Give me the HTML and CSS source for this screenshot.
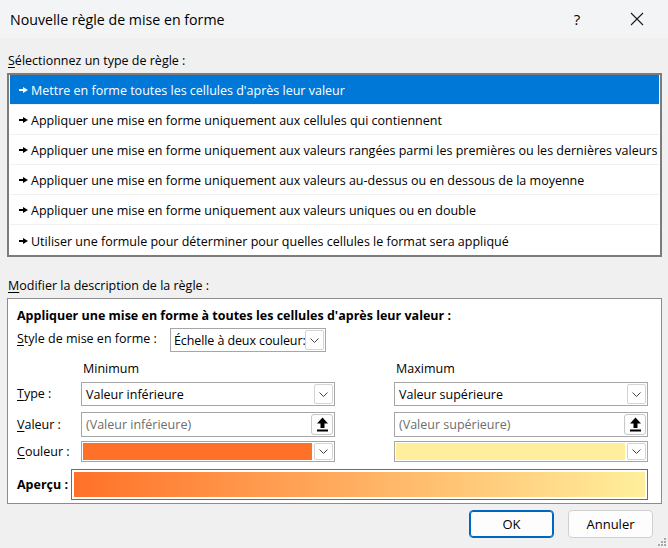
FILE: index.html
```html
<!DOCTYPE html>
<html lang="fr">
<head>
    <meta charset="UTF-8">
    <title>Nouvelle règle de mise en forme</title>
    <link rel="stylesheet" href="styles.css">
</head>
<body>
    <div class="dialog">
        <!-- Title bar -->
        <div class="titlebar">
            <span class="title">Nouvelle règle de mise en forme</span>
            <span class="help">?</span>
            <svg class="close" width="14" height="14" viewBox="0 0 14 14">
                <path d="M1 1 L13 13 M13 1 L1 13" stroke="#1a1a1a" stroke-width="1.1" fill="none"/>
            </svg>
        </div>

        <div class="section-label label-top"><u>S</u>électionnez un type de règle :</div>

        <ul class="rule-list">
            <li class="selected"><span class="pointer"></span>Mettre en forme toutes les cellules d'après leur valeur</li>
            <li><span class="pointer"></span>Appliquer une mise en forme uniquement aux cellules qui contiennent</li>
            <li><span class="pointer"></span>Appliquer une mise en forme uniquement aux valeurs rangées parmi les premières ou les dernières valeurs</li>
            <li><span class="pointer"></span>Appliquer une mise en forme uniquement aux valeurs au-dessus ou en dessous de la moyenne</li>
            <li><span class="pointer"></span>Appliquer une mise en forme uniquement aux valeurs uniques ou en double</li>
            <li><span class="pointer"></span>Utiliser une formule pour déterminer pour quelles cellules le format sera appliqué</li>
        </ul>

        <div class="section-label label-mid"><u>M</u>odifier la description de la règle :</div>

        <div class="desc">
            <div class="desc-title">Appliquer une mise en forme à toutes les cellules d'après leur valeur :</div>

            <div class="style-row">
                <span class="style-label"><u>S</u>tyle de mise en forme :</span>
                <div class="combo combo-style">
                    <span class="combo-text">Échelle à deux couleur:</span>
                    <span class="drop"><svg width="9" height="5" viewBox="0 0 9 5"><path d="M0.5 0.5 L4.5 4.5 L8.5 0.5" stroke="#444" fill="none"/></svg></span>
                </div>
            </div>

            <div class="grid">
                <span></span>
                <span class="col-head">Minimum</span>
                <span></span>
                <span class="col-head">Maximum</span>

                <span class="row-label row-type"><u>T</u>ype :</span>
                <div class="combo row-type">
                    <span class="combo-text">Valeur inférieure</span>
                    <span class="drop"><svg width="9" height="5" viewBox="0 0 9 5"><path d="M0.5 0.5 L4.5 4.5 L8.5 0.5" stroke="#444" fill="none"/></svg></span>
                </div>
                <span></span>
                <div class="combo row-type">
                    <span class="combo-text">Valeur supérieure</span>
                    <span class="drop"><svg width="9" height="5" viewBox="0 0 9 5"><path d="M0.5 0.5 L4.5 4.5 L8.5 0.5" stroke="#444" fill="none"/></svg></span>
                </div>

                <span class="row-label row-value"><u>V</u>aleur :</span>
                <div class="field row-value">
                    <span class="placeholder">(Valeur inférieure)</span>
                    <span class="ref-btn"><svg width="13" height="15" viewBox="0 0 13 15"><path d="M6.5 0.5 L12 6.5 L8.5 6.5 L8.5 11 L4.5 11 L4.5 6.5 L1 6.5 Z" fill="#000"/><rect x="1" y="12.5" width="11" height="2" fill="#000"/></svg></span>
                </div>
                <span></span>
                <div class="field row-value">
                    <span class="placeholder">(Valeur supérieure)</span>
                    <span class="ref-btn"><svg width="13" height="15" viewBox="0 0 13 15"><path d="M6.5 0.5 L12 6.5 L8.5 6.5 L8.5 11 L4.5 11 L4.5 6.5 L1 6.5 Z" fill="#000"/><rect x="1" y="12.5" width="11" height="2" fill="#000"/></svg></span>
                </div>

                <span class="row-label row-color"><u>C</u>ouleur :</span>
                <div class="combo row-color">
                    <span class="swatch swatch-min"></span>
                    <span class="drop"><svg width="9" height="5" viewBox="0 0 9 5"><path d="M0.5 0.5 L4.5 4.5 L8.5 0.5" stroke="#444" fill="none"/></svg></span>
                </div>
                <span></span>
                <div class="combo row-color">
                    <span class="swatch swatch-max"></span>
                    <span class="drop"><svg width="9" height="5" viewBox="0 0 9 5"><path d="M0.5 0.5 L4.5 4.5 L8.5 0.5" stroke="#444" fill="none"/></svg></span>
                </div>
            </div>

            <div class="preview-row">
                <span class="preview-label">Aperçu :</span>
                <div class="preview"><div class="gradient"></div></div>
            </div>
        </div>

        <div class="buttons">
            <button class="button primary">OK</button>
            <button class="button">Annuler</button>
        </div>

        <svg class="grip" width="10" height="10" viewBox="0 0 10 10">
            <rect x="7" y="1" width="2" height="2" fill="#a8a8a8"/>
            <rect x="4" y="4" width="2" height="2" fill="#a8a8a8"/>
            <rect x="7" y="4" width="2" height="2" fill="#a8a8a8"/>
            <rect x="1" y="7" width="2" height="2" fill="#a8a8a8"/>
            <rect x="4" y="7" width="2" height="2" fill="#a8a8a8"/>
            <rect x="7" y="7" width="2" height="2" fill="#a8a8a8"/>
        </svg>
    </div>
</body>
</html>
```

FILE: styles.css
```css
* {
    margin: 0;
    padding: 0;
    box-sizing: border-box;
}

body {
    width: 668px;
    height: 548px;
    overflow: hidden;
    background-color: #f0f0f0;
    font-family: 'Open Sans', 'Noto Sans', sans-serif;
    font-size: 12.5px;
    color: #000;
}

.dialog {
    position: relative;
    width: 668px;
    height: 548px;
}

u {
    text-decoration: underline;
    text-underline-offset: 2px;
}

/* Title bar */
.titlebar {
    height: 38px;
    display: flex;
    align-items: center;
    background: #f3f4f6;
    padding-left: 10px;
}

.title {
    font-size: 14.2px;
    flex: 1;
}

.help {
    font-size: 15px;
    width: 14px;
    text-align: center;
    margin-right: 46px;
}

.close {
    margin-right: 24px;
}

/* Section labels */
.section-label {
    line-height: 16px;
    padding-left: 8px;
}

.label-top {
    height: 35px;
    padding-top: 15px;
}

.label-mid {
    height: 41px;
    padding-top: 21px;
}

/* Rule type list */
.rule-list {
    list-style: none;
    margin-left: 7px;
    width: 655px;
    height: 184px;
    background: #fff;
    border: 2px solid #7c7c7c;
    padding: 0 1px;
}

.rule-list li {
    height: 30px;
    display: flex;
    align-items: center;
    padding-left: 9px;
    padding-top: 2px;
    border-bottom: 1px solid #f0f0f0;
    white-space: nowrap;
    overflow: hidden;
}

.rule-list li:last-child {
    border-bottom: none;
}

.rule-list li.selected {
    background: #0078d7;
    color: #fff;
}

.pointer {
    position: relative;
    width: 10px;
    height: 6px;
    margin-right: 2px;
    margin-top: -1px;
}

.pointer::before {
    content: '';
    position: absolute;
    left: 0;
    top: 2px;
    width: 5px;
    height: 2px;
    background: currentColor;
}

.pointer::after {
    content: '';
    position: absolute;
    left: 4px;
    top: 0;
    border-left: 5px solid currentColor;
    border-top: 3px solid transparent;
    border-bottom: 3px solid transparent;
}

/* Description panel */
.desc {
    margin-left: 7px;
    width: 655px;
    height: 206px;
    background: #fff;
    border: 1px solid #8c8c8c;
    padding-left: 9px;
}

.desc-title {
    font-weight: 700;
    line-height: 16px;
    padding-top: 9px;
    height: 28px;
}

.style-row {
    display: flex;
    align-items: center;
    height: 25px;
    padding-top: 1px;
}

.style-label {
    width: 153px;
    margin-top: -3px;
}

.grid {
    display: grid;
    grid-template-columns: 64px 254px 59px 254px;
    grid-template-rows: 28px 24px 25px 21px;
    row-gap: 4px;
    align-items: center;
}

.col-head {
    align-self: start;
    padding-top: 9px;
    padding-left: 2px;
    line-height: 16px;
}

.grid .row-type {
    margin-top: -4px;
}

.row-label {
    line-height: 16px;
}

.combo, .field {
    height: 100%;
    display: flex;
    align-items: center;
    background: #fff;
    border: 1px solid #a6a6a6;
    padding: 1px;
}

.combo-text, .placeholder {
    flex: 1;
    padding-left: 3px;
    white-space: nowrap;
    overflow: hidden;
}

.placeholder {
    color: #6d6d6d;
}

.drop {
    width: 19px;
    height: 100%;
    display: flex;
    align-items: center;
    justify-content: center;
    border: 1px solid #d4d4d4;
    border-radius: 2px;
    background: #fff;
}

.combo-style {
    width: 156px;
    height: 24px;
}

.combo-style .combo-text {
    padding-left: 2px;
    letter-spacing: -0.1px;
}

.ref-btn {
    width: 22px;
    height: 100%;
    display: flex;
    align-items: center;
    justify-content: center;
    border: 1px solid #c8c8c8;
    border-radius: 3px;
    background: #fdfdfd;
}

.swatch {
    flex: 1;
    height: 100%;
    margin-right: 2px;
}

.swatch-min {
    background: #ff7128;
}

.swatch-max {
    background: #ffef9c;
}

.preview-row {
    display: flex;
    align-items: center;
    margin-top: 7px;
    height: 31px;
}

.preview-label {
    font-weight: 700;
    width: 54px;
}

.preview {
    width: 577px;
    height: 31px;
    border: 1px solid #6e6e6e;
    padding: 2px;
}

.gradient {
    width: 100%;
    height: 100%;
    background: linear-gradient(to right, #ff7128, #ffef9c);
}

/* Buttons */
.buttons {
    display: flex;
    justify-content: flex-end;
    gap: 14px;
    padding-top: 6px;
    padding-right: 15px;
}

.button {
    width: 85px;
    height: 28px;
    font-family: inherit;
    font-size: 13px;
    background: #fdfdfd;
    border: 1px solid #d0d0d0;
    border-radius: 4px;
    color: #000;
}

.button.primary {
    border: 1px solid #0067c0;
    box-shadow: inset 0 0 0 1px #0067c0;
}

.grip {
    position: absolute;
    right: 1px;
    bottom: 1px;
}
```
